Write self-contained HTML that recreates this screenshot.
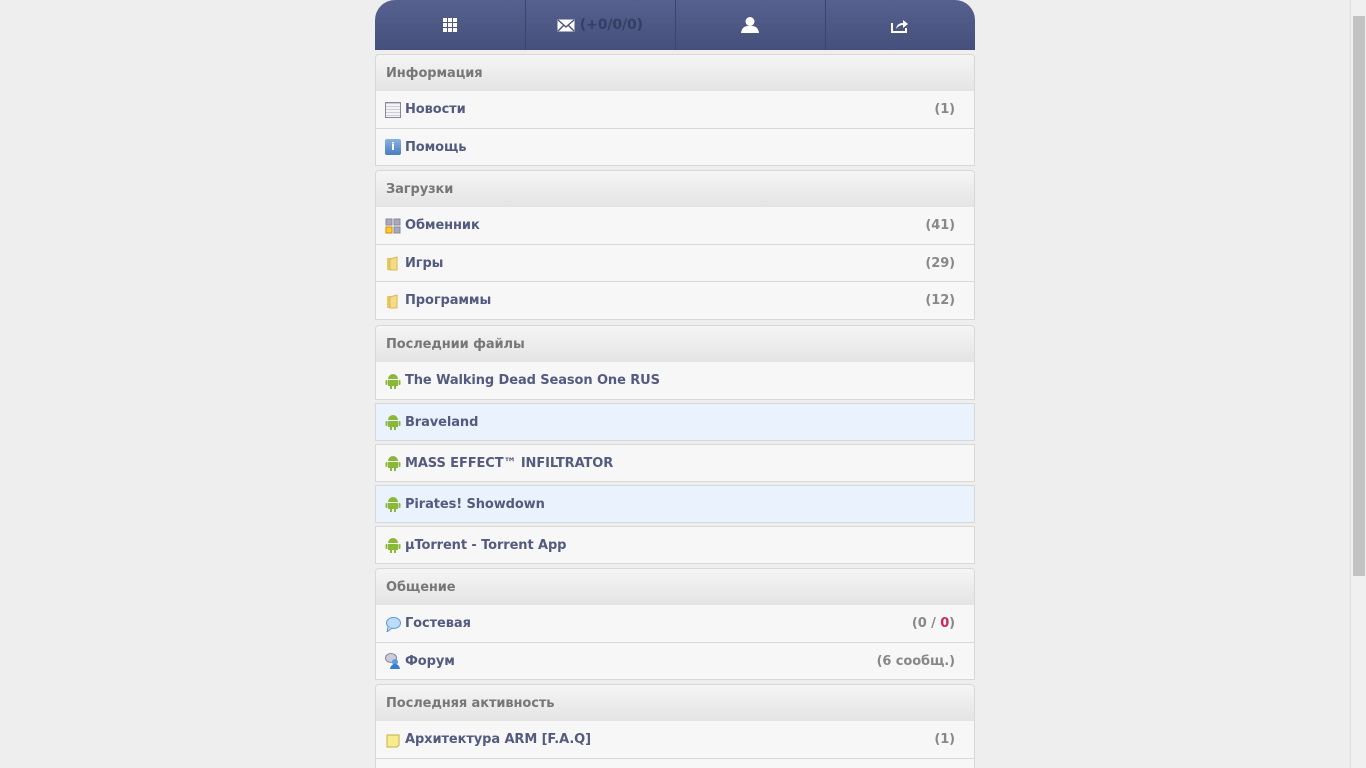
<!DOCTYPE html>
<html><head><meta charset="utf-8"><style>
*{margin:0;padding:0;box-sizing:border-box}
html,body{overflow:hidden}
body{width:1366px;height:768px;background:#eeeeee;position:relative;font-family:"DejaVu Sans","Liberation Sans",sans-serif;font-weight:bold;font-size:13px;letter-spacing:-0.1px}
.nav{position:absolute;left:375px;top:0;width:600px;height:50px;background:linear-gradient(#56618f,#454f7b);border-radius:20px 20px 0 0;overflow:hidden}
.nav .d{position:absolute;top:0;width:1px;height:50px;background:#3a4470}
.nav .c{position:absolute;top:0;height:50px;width:150px;display:flex;align-items:center;justify-content:center;color:#353d62;font-size:14px}
.h,.r{position:absolute;left:375px;width:600px;border:1px solid #d8d8d8;padding-left:10px;display:flex;align-items:center}
.h{background:linear-gradient(#f5f5f5,#e4e4e4);color:#777;border-radius:4px 4px 0 0;height:38px}
.r{background:#f7f7f7;color:#535b7e;border-top:none;height:38px;padding-left:9px}
.r.c2{border-top:1px solid #d8d8d8}
.r.b{background:#eaf2fd}
.ic{width:16px;height:16px;margin-right:4px;display:inline-block;flex:none}
.n{position:absolute;right:19px;color:#888;font-weight:bold}
.sb{position:absolute;right:0;top:0;width:16px;height:768px;background:#f0f0f0;border-left:1px solid #ddd}
.sb div{position:absolute;left:2px;top:16px;width:12px;height:560px;background:#c2c2c2}
</style></head><body>
<div class="nav">
<div class="d" style="left:150px"></div><div class="d" style="left:300px"></div><div class="d" style="left:450px"></div>
<div class="c" style="left:0"><svg width="14" height="14" viewBox="0 0 14 14" fill="#fff"><rect x="0" y="0" width="4" height="4"/><rect x="5" y="0" width="4" height="4"/><rect x="10" y="0" width="4" height="4"/><rect x="0" y="5" width="4" height="4"/><rect x="5" y="5" width="4" height="4"/><rect x="10" y="5" width="4" height="4"/><rect x="0" y="10" width="4" height="4"/><rect x="5" y="10" width="4" height="4"/><rect x="10" y="10" width="4" height="4"/></svg></div>
<div class="c" style="left:150px"><svg width="18" height="13" viewBox="0 0 18 13"><rect x="0.5" y="0.5" width="17" height="12" fill="#fff"/><path d="M1 1L9 8L17 1M1 12L7 6M17 12L11 6" stroke="#485280" stroke-width="1.4" fill="none"/></svg>&nbsp;(+0/0/0)</div>
<div class="c" style="left:300px"><svg width="18" height="16" viewBox="0 0 18 16" fill="#fff"><circle cx="9" cy="4.5" r="4.5"/><path d="M0 16Q1 9 7 9H11Q17 9 18 16Z"/></svg></div>
<div class="c" style="left:450px"><svg width="18" height="15" viewBox="0 0 18 15"><path d="M1 5V14H15V10" stroke="#fff" stroke-width="2" fill="none"/><path d="M5 11Q6 5 12 5V2L17 6L12 10V7Q8 7 5 11Z" fill="#fff"/></svg></div>
</div>

<div class="h" style="top:54px">Информация</div>
<div class="r" style="top:91px"><span class="ic" style="background:repeating-linear-gradient(#ccd 0 1px,#f4f4f4 1px 3px);border:1px solid #889"></span>Новости<span class="n">(1)</span></div>
<div class="r c2" style="top:128px"><span class="ic" style="background:linear-gradient(#8ab2e0,#4a7cc0);border-radius:2px;color:#fff;font-size:11px;text-align:center;line-height:16px">i</span>Помощь</div>

<div class="h" style="top:170px">Загрузки</div>
<div class="r" style="top:207px"><span class="ic"><svg width="16" height="16"><rect x="1" y="1" width="6" height="6" fill="#aab" stroke="#889"/><rect x="9" y="1" width="6" height="6" fill="#aab" stroke="#889"/><rect x="1" y="9" width="6" height="6" fill="#fc3" stroke="#d80"/><rect x="9" y="9" width="6" height="6" fill="#aab" stroke="#889"/></svg></span>Обменник<span class="n">(41)</span></div>
<div class="r c2" style="top:244px"><span class="ic"><svg width="16" height="16"><path d="M2 3H8V15H2Z" fill="#e8c860"/><path d="M5 4L12 2V15H5Z" fill="#f3db8a" stroke="#d8b850"/></svg></span>Игры<span class="n">(29)</span></div>
<div class="r" style="top:282px"><span class="ic"><svg width="16" height="16"><path d="M2 3H8V15H2Z" fill="#e8c860"/><path d="M5 4L12 2V15H5Z" fill="#f3db8a" stroke="#d8b850"/></svg></span>Программы<span class="n">(12)</span></div>

<div class="h" style="top:325px">Последнии файлы</div>
<div class="r" style="top:362px"><span class="ic"><svg width="16" height="16" fill="#8ab838"><path d="M3 6A5 5 0 0 1 13 6Z"/><rect x="3" y="7" width="10" height="6"/><rect x="0.5" y="7" width="2" height="5" rx="1"/><rect x="13.5" y="7" width="2" height="5" rx="1"/><rect x="5" y="12" width="2" height="4"/><rect x="9" y="12" width="2" height="4"/></svg></span>The Walking Dead Season One RUS</div>
<div class="r b c2" style="top:403px"><span class="ic"><svg width="16" height="16" fill="#8ab838"><path d="M3 6A5 5 0 0 1 13 6Z"/><rect x="3" y="7" width="10" height="6"/><rect x="0.5" y="7" width="2" height="5" rx="1"/><rect x="13.5" y="7" width="2" height="5" rx="1"/><rect x="5" y="12" width="2" height="4"/><rect x="9" y="12" width="2" height="4"/></svg></span>Braveland</div>
<div class="r c2" style="top:444px"><span class="ic"><svg width="16" height="16" fill="#8ab838"><path d="M3 6A5 5 0 0 1 13 6Z"/><rect x="3" y="7" width="10" height="6"/><rect x="0.5" y="7" width="2" height="5" rx="1"/><rect x="13.5" y="7" width="2" height="5" rx="1"/><rect x="5" y="12" width="2" height="4"/><rect x="9" y="12" width="2" height="4"/></svg></span>MASS EFFECT™ INFILTRATOR</div>
<div class="r b c2" style="top:485px"><span class="ic"><svg width="16" height="16" fill="#8ab838"><path d="M3 6A5 5 0 0 1 13 6Z"/><rect x="3" y="7" width="10" height="6"/><rect x="0.5" y="7" width="2" height="5" rx="1"/><rect x="13.5" y="7" width="2" height="5" rx="1"/><rect x="5" y="12" width="2" height="4"/><rect x="9" y="12" width="2" height="4"/></svg></span>Pirates! Showdown</div>
<div class="r c2" style="top:526px"><span class="ic"><svg width="16" height="16" fill="#8ab838"><path d="M3 6A5 5 0 0 1 13 6Z"/><rect x="3" y="7" width="10" height="6"/><rect x="0.5" y="7" width="2" height="5" rx="1"/><rect x="13.5" y="7" width="2" height="5" rx="1"/><rect x="5" y="12" width="2" height="4"/><rect x="9" y="12" width="2" height="4"/></svg></span>µTorrent - Torrent App</div>

<div class="h" style="top:568px">Общение</div>
<div class="r" style="top:605px"><span class="ic"><svg width="16" height="16"><ellipse cx="8.5" cy="7" rx="7" ry="5.5" fill="#bcdcf8" stroke="#5a9ad8"/><path d="M3 11L2 16L7 12" fill="#bcdcf8" stroke="#5a9ad8"/></svg></span>Гостевая<span class="n">(0 / <span style="color:#d0245c">0</span>)</span></div>
<div class="r c2" style="top:642px"><span class="ic"><svg width="16" height="16"><ellipse cx="6" cy="5" rx="5.5" ry="4.5" fill="#ccd" stroke="#889"/><circle cx="10" cy="9" r="3" fill="#5a9ae0"/><path d="M5 16Q6 11 10 11Q14 11 15 16Z" fill="#3a7ad0"/></svg></span>Форум<span class="n">(6 сообщ.)</span></div>

<div class="h" style="top:684px">Последняя активность</div>
<div class="r" style="top:721px"><span class="ic"><svg width="16" height="16"><path d="M2 3H14V13L12 15H2Z" fill="#f8ec90" stroke="#c8b040"/></svg></span>Архитектура ARM [F.A.Q]<span class="n">(1)</span></div>
<div class="r c2" style="top:758px;height:10px;border-bottom:none"></div>

<div class="sb"><div></div></div>
</body></html>
